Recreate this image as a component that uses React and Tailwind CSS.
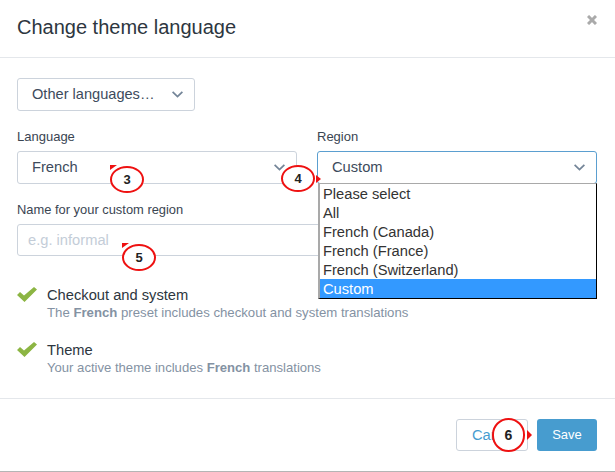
const regions = ['Please select', 'All', 'French (Canada)', 'French (France)', 'French (Switzerland)'];

function Caret() {
  return (
    <svg className="w-[11px] h-[7px] text-[#748598]" viewBox="0 0 11 7" fill="none" stroke="currentColor" strokeWidth="1.8">
      <path d="M0.6 0.8 L5.5 5.6 L10.4 0.8" />
    </svg>
  );
}

function Tick() {
  return (
    <svg className="w-5 h-[15px] text-[#8cb543] mt-[1px] shrink-0" viewBox="0 0 20 15" fill="currentColor">
      <path d="M0 8 L3 5 L7 8.5 L17 0 L20 2.5 L7.5 15 Z" />
    </svg>
  );
}

function Marker({ number, className }) {
  return (
    <div className={`absolute w-[34px] h-[27px] rounded-[50%] border-2 border-[#ee1111] bg-white flex items-center justify-center font-bold text-[13px] text-[#222] ${className}`}>
      {number}
    </div>
  );
}

export default function App() {
  return (
    <div className="relative w-[615px] h-[472px] bg-white overflow-hidden font-['Liberation_Sans',Arial,sans-serif] text-[#333e48] border-b border-[#b5b5b5]">
      <header className="h-[58px] pl-[17px] pr-[17px] flex items-center justify-between border-b border-[#e4e7eb]">
        <h1 className="text-[20px] text-[#2d3640] mt-[-3px]">Change theme language</h1>
        <svg className="w-[10px] h-[10px] text-[#aaaaaa] mt-[-17px] mr-[1px]" viewBox="0 0 10 10" stroke="currentColor" strokeWidth="3">
          <path d="M1 1 L9 9 M9 1 L1 9" />
        </svg>
      </header>

      <main className="h-[340px] pl-[17px] pr-[18px] pt-5">
        <button className="w-[178px] h-[33px] pl-[14px] pr-[11px] flex items-center justify-between border border-[#ccd3dc] rounded-[3px] text-[14.6px] text-[#3d4b5c]">
          Other languages…
          <Caret />
        </button>

        <div className="grid grid-cols-2 gap-5 mt-[16px]">
          <div>
            <label className="block text-[13px] leading-[20px] mb-[4px] text-[#3a4552]">Language</label>
            <div className="h-[33px] pl-[14px] pr-[11px] flex items-center justify-between border border-[#ccd3dc] rounded-[3px] text-[14.7px] text-[#3d4b5c]">
              French
              <Caret />
            </div>
          </div>
          <div>
            <label className="block text-[13px] leading-[20px] mb-[4px] text-[#3a4552]">Region</label>
            <div className="h-[33px] pl-[14px] pr-[11px] flex items-center justify-between border border-[#5b9fd0] rounded-[3px] text-[14.7px] text-[#3d4b5c]">
              Custom
              <Caret />
            </div>
          </div>
        </div>

        <label className="block mt-[16px] mb-[4px] text-[12.9px] leading-[20px] text-[#3a4552]">Name for your custom region</label>
        <div className="h-[32px] px-[10px] flex items-center border border-[#ccd3dc] rounded-[3px] text-[14.7px] text-[#c4cdd8]">e.g. informal</div>

        <div className="mt-[30px] flex gap-[10px]">
          <Tick />
          <div>
            <div className="text-[14.7px] leading-[18px] text-[#2d3640]">Checkout and system</div>
            <p className="text-[13.2px] leading-[16px] mt-[1px] text-[#8492a3]">The <b>French</b> preset includes checkout and system translations</p>
          </div>
        </div>
        <div className="mt-[20px] flex gap-[10px]">
          <Tick />
          <div>
            <div className="text-[14.7px] leading-[18px] text-[#2d3640]">Theme</div>
            <p className="text-[13.1px] leading-[16px] mt-[1px] text-[#8492a3]">Your active theme includes <b>French</b> translations</p>
          </div>
        </div>
      </main>

      <footer className="border-t border-[#e4e7eb] pt-5 pr-[18px] flex justify-end gap-[9px]">
        <button className="w-[72px] h-[32px] pl-[15px] text-left border border-[#ccd3dc] rounded-[3px] text-[14.7px] text-[#479ccf]">Cancel</button>
        <button className="w-[60px] h-[32px] rounded-[3px] bg-[#479ccf] text-white text-[13px]">Save</button>
      </footer>

      <ul className="absolute left-[318px] top-[183px] w-[279px] border-l-2 border-l-[#a9a9a9] border-t border-t-[#a9a9a9] border-r border-r-black border-b border-b-black bg-white text-[14.7px] leading-[21px] text-[#333]">
        {regions.map((region) => <li key={region} className="pl-[3px] h-[19px]">{region}</li>)}
        <li className="pl-[3px] h-[19px] bg-[#3399ff] text-white">Custom</li>
      </ul>

      <Marker number="3" className="left-[110px] top-[166px]" />
      <div className="absolute left-[110px] top-[165px] w-0 h-0 border-t-[5px] border-t-[#ee1111] border-r-[7px] border-r-transparent" />
      <Marker number="4" className="left-[281px] top-[165px]" />
      <div className="absolute left-[316px] top-[175px] w-0 h-0 border-y-[4px] border-y-transparent border-l-[5px] border-l-[#ee1111]" />
      <Marker number="5" className="left-[122px] top-[244px]" />
      <div className="absolute left-[122px] top-[243px] w-0 h-0 border-t-[5px] border-t-[#ee1111] border-r-[7px] border-r-transparent" />
      <Marker number="6" className="left-[492px] top-[418px] !w-[33px] !h-[34px] !rounded-full text-[14px]" />
      <div className="absolute left-[527px] top-[430px] w-0 h-0 border-y-[5px] border-y-transparent border-l-[5px] border-l-[#ee1111]" />
    </div>
  );
}
